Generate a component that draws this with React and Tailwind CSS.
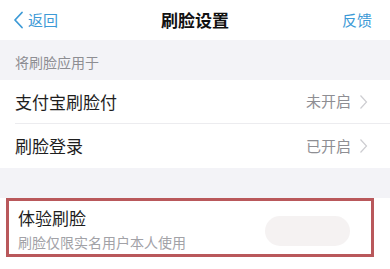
const font = { fontFamily: '"Noto Sans CJK SC", "Noto Sans", sans-serif' };

function Chevron() {
  return (
    <svg width="9" height="16" viewBox="0 0 9 16" className="ml-[8px]">
      <path d="M1.5 1.5 L7.5 8 L1.5 14.5" fill="none" stroke="#cdcdd1" strokeWidth="1.2" />
    </svg>
  );
}

function Row({ label, value, divider }) {
  return (
    <div className="bg-white pl-[15px]">
      <div className={`flex h-[44px] items-center justify-between pr-[22px] ${divider ? 'border-b border-[#ececef]' : ''}`}>
        <span className="text-[17px] text-[#1e1e1e]">{label}</span>
        <div className="flex items-center">
          <span className="text-[15px] text-[#8e8e93]">{value}</span>
          <Chevron />
        </div>
      </div>
    </div>
  );
}

export default function App() {
  return (
    <div className="w-[390px] h-[269px] overflow-hidden bg-white" style={font}>
      <div className="grid h-10 grid-cols-3 items-center bg-white px-[13px]">
        <div className="flex items-center text-[15px] text-[#3d9ad6]">
          <svg width="11" height="18" viewBox="0 0 11 18" className="mr-[4px]">
            <path d="M9 1.5 L2 9 L9 16.5" fill="none" stroke="#3d9ad6" strokeWidth="1.8" strokeLinecap="round" strokeLinejoin="round" />
          </svg>
          返回
        </div>
        <div className="text-center text-[17px] font-semibold text-[#111]">刷脸设置</div>
        <div className="pr-[5px] text-right text-[15px] text-[#3d9ad6]">反馈</div>
      </div>
      <div className="flex h-10 items-center bg-[#f3f3f7] pl-[15px] pt-[4px] text-[14px] text-[#8e8e93]">将刷脸应用于</div>
      <Row label="支付宝刷脸付" value="未开启" divider />
      <Row label="刷脸登录" value="已开启" />
      <div className="h-[30px] bg-[#f3f3f7]" />
      <div className="relative bg-white pb-[12px]">
        <div className="ml-[6px] w-[368px] h-[59px] border-[3px] border-[#b9585b] pl-[9px] pt-[5px]">
          <div className="text-[17px] leading-[24px] text-[#1e1e1e]">体验刷脸</div>
          <div className="mt-[2px] text-[14px] leading-[20px] text-[#a2a2a7]">刷脸仅限实名用户本人使用</div>
        </div>
        <div className="absolute left-[265px] top-[18px] h-[30px] w-[85px] rounded-full bg-[#f3efef] opacity-80" />
      </div>
    </div>
  );
}
